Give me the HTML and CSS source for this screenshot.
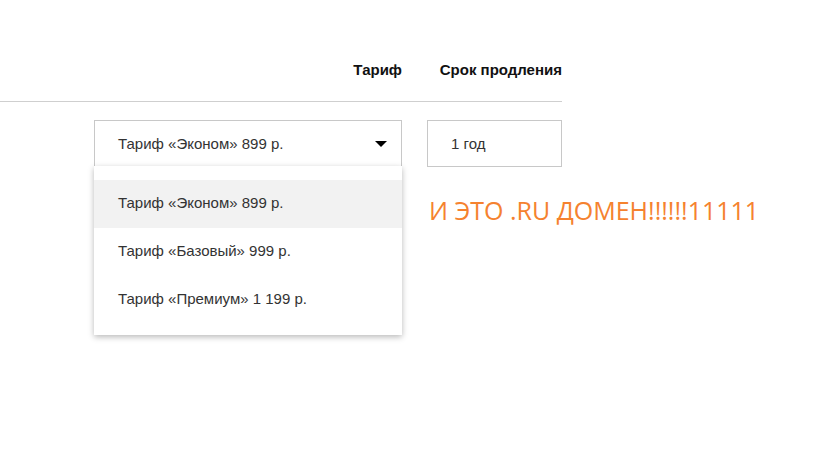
FILE: index.html
```html
<!DOCTYPE html>
<html lang="ru">
  <head>
    <meta charset="UTF-8" />
    <title>Тариф</title>
    <link rel="stylesheet" href="styles.css">
  </head>
  <body>
    <div class="tarif-blok">
      <div class="shapka">
        <div class="kol kol-tarif">Тариф</div>
        <div class="kol kol-srok">Срок продления</div>
      </div>

      <div class="ryad">
        <div class="kol-tarif">
          <div class="vybor">
            <span>Тариф «Эконом» 899 р.</span>
            <span class="strelka"></span>
            <!-- Открытый список тарифов -->
            <ul class="spisok">
              <li class="aktivnyj">Тариф «Эконом» 899 р.</li>
              <li>Тариф «Базовый» 999 р.</li>
              <li>Тариф «Премиум» 1 199 р.</li>
            </ul>
          </div>
        </div>
        <div class="kol-srok">
          <div class="pole">1 год</div>
          <p class="nadpis">И ЭТО .RU ДОМЕН!!!!!!11111</p>
        </div>
      </div>
    </div>
  </body>
</html>
```

FILE: styles.css
```css
html,
body {
  min-height: 100vh;
}

body {
  margin: 0;
  font-family: Arial, "Liberation Sans", sans-serif;
  color: #333;
  background: #fff;
}

.tarif-blok {
  width: 562px;
  padding-top: 61px;
}

/* Заголовки колонок над линией */
.shapka {
  display: flex;
  gap: 25px;
  padding-left: 94px;
  height: 40px;
  border-bottom: 1px solid #cfcfcf;
  font-size: 15px;
  font-weight: bold;
  color: #111;
}

.kol-tarif {
  width: 308px;
  flex: none;
}

.kol-srok {
  width: 135px;
  flex: none;
}

.shapka .kol {
  text-align: right;
}

.ryad {
  display: flex;
  gap: 25px;
  padding-left: 94px;
  margin-top: 18px;
}

.vybor {
  position: relative;
  height: 45px;
  border: 1px solid #c8c8c8;
  display: flex;
  align-items: center;
  justify-content: space-between;
  padding: 0 14px 0 23px;
  font-size: 15px;
}

.strelka {
  width: 0;
  height: 0;
  border-left: 6px solid transparent;
  border-right: 6px solid transparent;
  border-top: 6px solid #000;
}

.spisok {
  position: absolute;
  left: -1px;
  top: 45px;
  width: 308px;
  margin: 0;
  padding: 14px 0 11px;
  list-style: none;
  background: #fff;
  box-shadow: 0 2px 6px rgba(0, 0, 0, 0.28);
}

.spisok li {
  height: 48px;
  line-height: 46px;
  padding-left: 24px;
}

.spisok .aktivnyj {
  background: #f2f2f2;
}

.pole {
  height: 45px;
  border: 1px solid #c8c8c8;
  display: flex;
  align-items: center;
  padding-left: 23px;
  font-size: 15px;
}

.nadpis {
  margin: 26px 0 0 2px;
  white-space: nowrap;
  font-family: "Open Sans", sans-serif;
  font-size: 25px;
  color: #f5822f;
}
```
